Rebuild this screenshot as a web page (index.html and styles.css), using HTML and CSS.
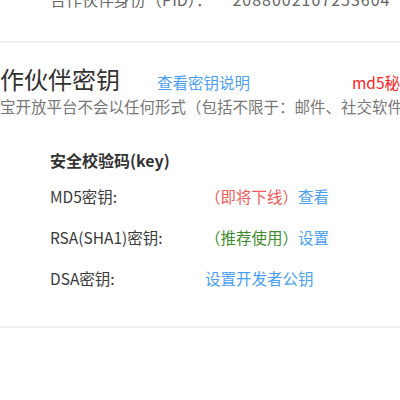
FILE: index.html
```html
<!DOCTYPE html>
<html lang="zh-CN">
<head>
    <meta charset="UTF-8">
    <meta name="viewport" content="width=device-width, initial-scale=1.0">
    <title>合作伙伴密钥</title>
    <link rel="stylesheet" href="styles.css">
</head>
<body>
    <div class="page">
        <div class="pid-row">
            <span class="pid-label">合作伙伴身份（PID）：</span>
            <span class="pid-value">2088002107253604</span>
        </div>
        <div class="divider"></div>

        <div class="key-section">
            <div class="section-head">
                <h2 class="section-title">合作伙伴密钥</h2>
                <a class="link" href="#">查看密钥说明</a>
                <span class="warn">md5秘钥即将下线，请尽快更换</span>
            </div>
            <p class="section-desc">支付宝开放平台不会以任何形式（包括不限于：邮件、社交软件、电话等）向您索取密钥</p>

            <div class="key-table">
                <div class="key-caption">安全校验码(key)</div>
                <div class="key-row">
                    <span class="key-name">MD5密钥:</span>
                    <span class="key-action"><span class="tag-red">（即将下线）</span><a class="link" href="#">查看</a></span>
                </div>
                <div class="key-row">
                    <span class="key-name">RSA(SHA1)密钥:</span>
                    <span class="key-action"><span class="tag-green">（推荐使用）</span><a class="link" href="#">设置</a></span>
                </div>
                <div class="key-row">
                    <span class="key-name">DSA密钥:</span>
                    <span class="key-action"><a class="link" href="#">设置开发者公钥</a></span>
                </div>
            </div>
        </div>
        <div class="divider bottom"></div>
    </div>
</body>
</html>
```

FILE: styles.css
```css
body {
    margin: 0;
    padding: 0;
    background: #fff;
    font-family: "Noto Sans CJK SC", "Noto Sans", sans-serif;
    color: #333;
    overflow: hidden;
}

.page {
    width: 400px;
    height: 400px;
    overflow: hidden;
}

/* PID row, cut off by the top edge */
.pid-row {
    margin-top: -13px;
    padding-left: 50px;
    font-size: 16px;
    line-height: 24px;
    color: #666;
    white-space: nowrap;
}
.pid-value {
    margin-left: 17px;
    letter-spacing: 1px;
}

.divider {
    height: 2px;
    background-color: #f1f1f1;
    margin-top: 30px;
}
.divider.bottom {
    margin-top: 36px;
}

.key-section {
    padding-top: 21px;
    white-space: nowrap;
}

.section-head {
    display: flex;
    align-items: baseline;
    margin-left: -24px;
}
.section-title {
    margin: 0;
    font-size: 24px;
    font-weight: normal;
    line-height: 30px;
    color: #333;
}
.section-head .link {
    margin-left: 37px;
    font-size: 15.5px;
}
.warn {
    margin-left: 102px;
    font-size: 15.5px;
    color: #f22;
}

.section-desc {
    margin: 2px 0 0 -31px;
    font-size: 15.5px;
    line-height: 20px;
    color: #777;
}

.link {
    color: #4a9ff3;
    text-decoration: none;
}

.key-table {
    padding-left: 50px;
    margin-top: 32px;
    font-size: 15.5px;
    line-height: 24px;
}
.key-caption {
    font-size: 16px;
    font-weight: bold;
    color: #333;
    margin-bottom: 12px;
}
.key-row {
    display: grid;
    grid-template-columns: 155px auto;
    color: #3a3a3a;
}
.key-row + .key-row {
    margin-top: 17px;
}
.tag-red {
    color: #f45a5a;
}
.tag-green {
    color: #3f8c2e;
}
```
